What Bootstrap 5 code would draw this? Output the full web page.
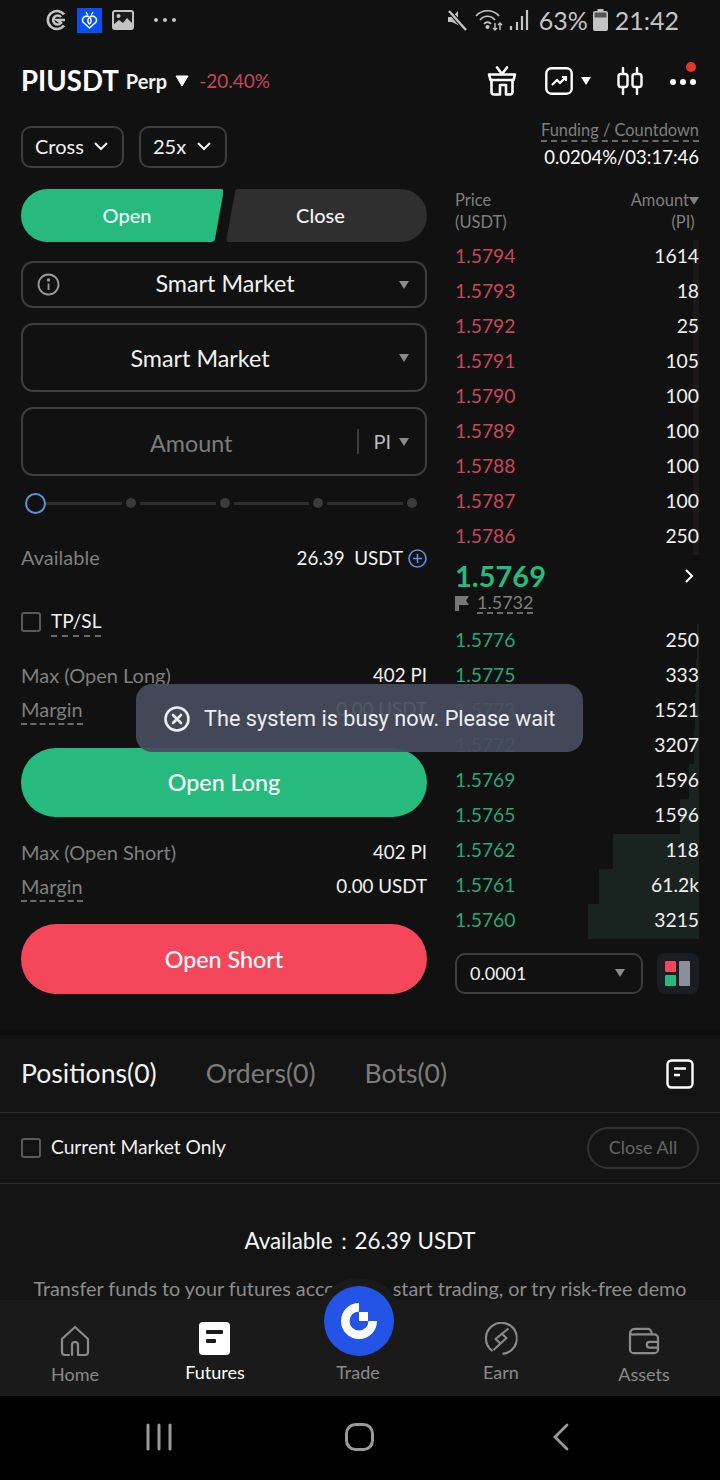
<!DOCTYPE html>
<html lang="en">
<head>
    <meta charset="UTF-8">
    <meta name="viewport" content="width=device-width, initial-scale=1.0">
    <title>PIUSDT Perp</title>
    <link href="https://cdn.jsdelivr.net/npm/bootstrap@5.3.3/dist/css/bootstrap.min.css" rel="stylesheet">
    <style>
        body {
            width: 720px;
            height: 1480px;
            overflow: hidden;
            background: #111;
            color: #f2f2f2;
            font-family: Lato, "Liberation Sans", sans-serif;
            position: relative;
        }
        svg { display: block; }
        .status-bar { height: 42px; padding: 0 41px 2px 46px; color: #c4c4c4; }
        .status-txt { font-size: 25px; line-height: 1; }
        .top-bar { height: 78px; padding: 0 24px 0 21px; }
        .pair-name { font-size: 27.600px; font-weight: 700; color: #fff; }
        .pair-perp { font-size: 20px; font-weight: 700; margin-left: 7px; }
        .pair-pct { font-size: 19px; color: #c7455f; margin-left: 10px; }
        .main-wrap { height: 910px; padding: 0 21px; }
        .left-col { width: 406px; padding-top: 6px; }
        .right-col { width: 244px; margin-left: 28px; }
        .pick-row { gap: 15px; }
        .pick-btn { height: 42px; border: 2px solid #3d3d3d; border-radius: 10px; font-size: 20px; padding: 0 14px 2px 12px; color: #f2f2f2; }
        .seg-row { margin-top: 21px; height: 53px; }
        .seg-open, .seg-close { height: 53px; font-size: 20px; font-weight: 500; padding-bottom: 2px; }
        .seg-open { width: 202px; background: #26ba7e; color: #eafff5; padding-left: 10px; clip-path: path('M26.5 0H200Q203 0 202.500 3L194 50Q193.500 53 190 53H26.500A26.500 26.500 0 0 1 26.500 0Z'); }
        .seg-close { width: 201px; margin-left: 3px; background: #2f2f2f; color: #f2f2f2; padding-right: 12px; clip-path: path('M12 0H174.500A26.500 26.500 0 0 1 174.500 53H3Q0 53 .5 50L9 3Q9.500 0 12 0Z'); }
        .box-field { border: 2px solid #3d3d3d; border-radius: 12px; padding: 0 16px 0 14px; font-size: 23.300px; position: relative; }
        .field-sm { height: 47px; margin-top: 19px; }
        .field-sm .field-label { padding: 0 9px 2px 0; }
        .field-lg { height: 69px; margin-top: 15px; }
        .field-label { flex: 1; text-align: center; }
        .label-market { padding: 2px 36px 0 0; }
        .label-amount { padding: 4px 12px 0 0; color: #7c7c7c; }
        .tri-down { width: 0; height: 0; border-left: 5.5px solid transparent; border-right: 5.5px solid transparent; border-top: 8px solid #8b8b8b; }
        .amt-unit { border-left: 2px solid #3d3d3d; height: 25px; padding-left: 14px; margin-right: 8px; line-height: 25px; font-size: 20px; color: #bcbcbc; }
        .slider-row { height: 20px; margin-top: 17px; padding-left: 4px; padding-right: 10px; }
        .slider-knob { width: 21px; height: 21px; border: 2.5px solid #5d90dd; border-radius: 50%; flex: none; margin-right: -4px; }
        .slider-line { height: 3px; background: #2e2e2e; flex: 1; margin: 0 4px; }
        .slider-dot { width: 10px; height: 10px; background: #3b3b3b; border-radius: 50%; flex: none; }
        .info-row { height: 24px; line-height: 22px; font-size: 20px; align-items: flex-start; }
        .info-val { font-size: 18.800px; }
        .avail-val { height: 24px; }
        .dim-txt { color: #7f7f7f; }
        .dash-txt { border-bottom: 2px dashed #6a6a6a; display: inline-block; padding-bottom: 3px; }
        .check-box { width: 20px; height: 20px; border: 2px solid #5a5a5a; border-radius: 3px; flex: none; }
        .tpsl-txt { font-size: 19px; margin-left: 10px; }
        .trade-btn { height: 69px; width: 100%; border-radius: 35px; border: 0; color: #fff; font-size: 23.300px; font-weight: 500; }
        .book-funding { text-align: right; font-size: 16.400px; margin-top: -2px; }
        .book-funding .dash-txt { line-height: 21px; padding-bottom: 0; }
        .funding-val { font-size: 18.500px; line-height: 22px; margin-top: 3px; color: #fff; }
        .book-head { margin-top: 21px; font-size: 16.500px; line-height: 22px; margin-bottom: 7px; color: #7f7f7f; }
        .book-line { height: 35px; position: relative; font-size: 19.300px; padding-bottom: 2px; }
        .book-line span { position: relative; }
        .depth-bar { position: absolute; right: 0; top: 0; bottom: 0; background: #19231f; }
        .depth-red { background: #1e1a1b; }
        .ask-price { color: #c9465d; }
        .bid-price { color: #2ba678; }
        .last-block { height: 69px; padding-top: 4px; }
        .last-price { font-size: 29px; font-weight: 700; color: #26ba7e; line-height: 34px; }
        .mark-price { font-size: 18px; color: #7f7f7f; line-height: 20px; margin-top: -1px; }
        .mark-price .dash-txt { padding-bottom: 0; }
        .step-row { margin-top: 14px; }
        .step-box { width: 188px; height: 41px; border: 2px solid #3d3d3d; border-radius: 10px; font-size: 18px; padding: 0 16px 0 13px; }
        .layout-box { width: 42px; height: 41px; background: #1a1d22; border-radius: 8px; }
        .lower-wrap { background: #141414; border-top: 5px solid #0e0e0e; height: 270px; overflow: hidden; }
        .tab-row { height: 78px; padding: 0 21px; border-bottom: 1px solid #2b2b2b; font-size: 26.600px; }
        .tab-off { color: #7c7c7c; margin-left: 49px; }
        .filter-row { height: 71px; padding: 0 21px; border-bottom: 1px solid #2b2b2b; font-size: 19.200px; }
        .filter-label { margin-left: 10px; padding-bottom: 2px; }
        .close-all { width: 112px; height: 42px; border: 2px solid #333; border-radius: 21px; color: #666; font-size: 18px; padding: 0 0 2px; }
        .empty-title { margin-top: 41px; font-size: 22.400px; line-height: 32px; color: #f5f5f5; }
        .empty-sub { margin-top: 17px; font-size: 19.800px; line-height: 28px; color: #8c8c8c; white-space: nowrap; }
        .tab-bar { height: 96px; background: #1a1a1a; position: relative; }
        .tab-item { position: absolute; top: 0; bottom: 0; width: 100px; }
        .tab-item svg { position: absolute; top: 25px; left: 50%; transform: translateX(-50%); }
        .tab-item div { position: absolute; left: 0; right: 0; text-align: center; font-size: 18px; color: #8a8a8a; line-height: 22px; top: 61px; }
        .tab-item .tab-low { top: 63px; }
        .tab-item .tab-on { color: #fff; }
        .tab-item .icon-futures { top: 22px; }
        .tab-item .icon-earn { top: 22px; }
        .tab-item .icon-assets { top: 27px; }
        .trade-halo { position: absolute; left: 315px; top: -22px; width: 88px; height: 88px; border-radius: 50%; background: #1a1a1a; }
        .trade-circle { position: absolute; left: 324px; top: -14px; width: 70px; height: 70px; border-radius: 50%; background: #2354e6; }
        .sys-bar { height: 84px; background: #000; }
        .sys-icon { position: absolute; top: 27px; }
        .busy-toast { position: absolute; left: 136px; top: 684px; width: 447px; height: 68px; border-radius: 16px; background: rgba(70, 76, 92, .93); font-family: Roboto, sans-serif; font-size: 21.700px; color: #eceef2; padding: 2px 0 0 28px; gap: 14px; }
        .red-dot { position: absolute; right: 24px; top: 62px; width: 10px; height: 10px; border-radius: 50%; background: #e5352b; }
    </style>
</head>
<body>
    <!-- status bar -->
    <div class="status-bar d-flex align-items-center justify-content-between">
        <div class="d-flex align-items-center">
            <svg width="22" height="22" viewBox="0 0 22 22" fill="none" stroke="#c4c4c4" stroke-width="2.600"><path d="M18 5.500A9 9 0 1 0 18 16.500"/><path d="M15 8A4.500 4.500 0 1 0 15 14L11 11H19"/></svg>
            <svg width="25" height="25" viewBox="0 0 25 25" style="margin-left:9px"><rect width="25" height="25" fill="#0a4ff0"/><path d="M12.500 20L6 14A4 4 0 0 1 12.500 9.500A4 4 0 0 1 19 14Z M12.500 9.500A4 4 0 0 0 12.500 16A4 4 0 0 0 12.500 9.500Z" fill="none" stroke="#fff" stroke-width="1.500"/><path d="M9 4L11 7.500M16 4L14 7.500" fill="none" stroke="#fff" stroke-width="1.300"/></svg>
            <svg width="22" height="20" viewBox="0 0 22 20" style="margin-left:10px"><rect x="1" y="1" width="20" height="18" rx="2" fill="#1c1c1c" stroke="#c4c4c4" stroke-width="2"/><path d="M1 19V15L7 10L11 13L15 8L21 14V19Z" fill="#c4c4c4"/><circle cx="6.500" cy="6" r="2" fill="#c4c4c4"/></svg>
            <svg width="24" height="6" viewBox="0 0 24 6" style="margin-left:19px"><circle cx="3" cy="3" r="2" fill="#c4c4c4"/><circle cx="12" cy="3" r="2" fill="#c4c4c4"/><circle cx="21" cy="3" r="2" fill="#c4c4c4"/></svg>
        </div>
        <div class="d-flex align-items-center">
            <svg width="20" height="22" viewBox="0 0 20 22"><path d="M1 8H5L11 2V16L5 13H1Z" fill="#c4c4c4"/><path d="M2 2L19 21" stroke="#111" stroke-width="4.500"/><path d="M2 2L19 21" stroke="#c4c4c4" stroke-width="2.400"/></svg>
            <svg width="28" height="22" viewBox="0 0 28 22" fill="none" stroke="#c4c4c4" stroke-width="1.700" style="margin-left:8px"><path d="M1 7C7 0 18 0 24 7"/><path d="M5 11C9 6 16 6 20 11"/><path d="M9 15C11 12.500 14 12.500 16 15"/><circle cx="12.500" cy="18" r="1.200" fill="#c4c4c4"/><path d="M20 14V21M18 19L20 21L22 19M25 21V14M23 16L25 14L27 16" stroke-width="1.400"/></svg>
            <svg width="20" height="22" viewBox="0 0 20 22" stroke="#c4c4c4" stroke-width="2.200" style="margin-left:6px"><path d="M2 21V17M8 21V13M13 21V7M18 21V1"/></svg>
            <span class="status-txt" style="margin-left:10px">63%</span>
            <svg width="15" height="22" viewBox="0 0 15 22" style="margin-left:5px"><path d="M4.500 0H10.500V2H13A2 2 0 0 1 15 4V20A2 2 0 0 1 13 22H2A2 2 0 0 1 0 20V4A2 2 0 0 1 2 2H4.500Z" fill="#c4c4c4"/><rect x="1.500" y="3.500" width="12" height="5" fill="#555"/></svg>
            <span class="status-txt" style="margin-left:7px">21:42</span>
        </div>
    </div>

    <!-- pair header -->
    <div class="top-bar d-flex align-items-center justify-content-between">
        <div class="d-flex align-items-center">
            <span class="pair-name">PIUSDT</span>
            <span class="pair-perp">Perp</span>
            <svg width="14" height="12" viewBox="0 0 14 12" class="ms-2"><path d="M1 1H13L7 11Z" fill="#fff" stroke="#fff" stroke-linejoin="round"/></svg>
            <span class="pair-pct">-20.40%</span>
        </div>
        <div class="d-flex align-items-center">
            <svg width="30" height="30" viewBox="0 0 30 30" fill="none" stroke="#fff" stroke-width="2.600" stroke-linejoin="round" stroke-linecap="round"><path d="M2 8.500H28L26.500 14H3.500Z"/><path d="M4.500 14V26A2.500 2.500 0 0 0 7 28.500H13V19H19V28.500H23A2.500 2.500 0 0 0 25.500 26V14"/><path d="M10 1.500L15 8M20 1.500L15 8"/></svg>
            <svg width="28" height="28" viewBox="0 0 28 28" fill="none" stroke="#fff" stroke-width="2.400" style="margin-left:28px"><rect x="1.300" y="1.300" width="25.400" height="25.400" rx="5"/><path d="M7 18L12 13L15 16L21 10M17 10H21V14" stroke-width="2.200"/></svg>
            <svg width="10" height="8" viewBox="0 0 10 8" style="margin-left:8px"><path d="M0 0H10L5 8Z" fill="#fff"/></svg>
            <svg width="26" height="28" viewBox="0 0 26 28" fill="none" stroke="#fff" stroke-width="2.400" stroke-linecap="round" style="margin-left:26px"><path d="M6 1V27M20 1V27"/><rect x="1.500" y="7" width="9" height="13" rx="2.500" fill="#111"/><rect x="15.500" y="7" width="9" height="13" rx="2.500" fill="#111"/></svg>
            <svg width="26" height="6" viewBox="0 0 26 6" style="margin-left:27px;margin-top:2px"><circle cx="3" cy="3" r="3" fill="#fff"/><circle cx="13" cy="3" r="3" fill="#fff"/><circle cx="23" cy="3" r="3" fill="#fff"/></svg>
        </div>
    </div>
    <div class="red-dot"></div>

    <div class="main-wrap d-flex">
        <!-- order form -->
        <div class="left-col">
            <div class="pick-row d-flex">
                <button class="btn pick-btn d-flex align-items-center" style="width:103px">Cross<svg class="ms-auto" width="14" height="9" viewBox="0 0 14 9" fill="none" stroke="#f2f2f2" stroke-width="2"><path d="M1 1L7 7L13 1"/></svg></button>
                <button class="btn pick-btn d-flex align-items-center" style="width:88px">25x<svg class="ms-auto" width="14" height="9" viewBox="0 0 14 9" fill="none" stroke="#f2f2f2" stroke-width="2"><path d="M1 1L7 7L13 1"/></svg></button>
            </div>
            <div class="seg-row d-flex">
                <div class="seg-open d-flex align-items-center justify-content-center">Open</div>
                <div class="seg-close d-flex align-items-center justify-content-center">Close</div>
            </div>
            <div class="box-field field-sm d-flex align-items-center">
                <svg width="23" height="23" viewBox="0 0 23 23" fill="none" stroke="#9a9a9a" stroke-width="1.800"><circle cx="11.500" cy="11.500" r="10"/><path d="M11.500 10.500V17"/><circle cx="11.500" cy="7" r=".8"/></svg>
                <span class="field-label">Smart Market</span>
                <span class="tri-down"></span>
            </div>
            <div class="box-field field-lg d-flex align-items-center">
                <span class="field-label label-market">Smart Market</span>
                <span class="tri-down"></span>
            </div>
            <div class="box-field field-lg d-flex align-items-center">
                <span class="field-label label-amount">Amount</span>
                <span class="amt-unit">PI</span>
                <span class="tri-down"></span>
            </div>
            <div class="slider-row d-flex align-items-center">
                <span class="slider-knob"></span>
                <span class="slider-line"></span><span class="slider-dot"></span>
                <span class="slider-line"></span><span class="slider-dot"></span>
                <span class="slider-line"></span><span class="slider-dot"></span>
                <span class="slider-line"></span><span class="slider-dot"></span>
            </div>
            <div class="info-row d-flex justify-content-between" style="margin-top:33px">
                <span class="dim-txt">Available</span>
                <span class="info-val avail-val d-flex align-items-center">26.39&nbsp;&nbsp;USDT
                    <svg width="19" height="19" viewBox="0 0 19 19" fill="none" stroke="#5d90dd" stroke-width="1.600" style="margin-left:5px"><circle cx="9.500" cy="9.500" r="8.500"/><path d="M9.500 5V14M5 9.500H14"/></svg>
                </span>
            </div>
            <div class="info-row d-flex" style="margin-top:40px">
                <span class="check-box" style="margin-top:2px"></span>
                <span class="dash-txt tpsl-txt">TP/SL</span>
            </div>
            <div class="info-row d-flex justify-content-between" style="margin-top:30px">
                <span class="dim-txt">Max (Open Long)</span><span class="info-val">402 PI</span>
            </div>
            <div class="info-row d-flex justify-content-between" style="margin-top:10px">
                <span class="dim-txt dash-txt">Margin</span><span class="info-val">0.00 USDT</span>
            </div>
            <button class="btn trade-btn d-block" style="margin-top:26px;background:#26ba7e">Open Long</button>
            <div class="info-row d-flex justify-content-between" style="margin-top:24px">
                <span class="dim-txt">Max (Open Short)</span><span class="info-val">402 PI</span>
            </div>
            <div class="info-row d-flex justify-content-between" style="margin-top:10px">
                <span class="dim-txt dash-txt">Margin</span><span class="info-val">0.00 USDT</span>
            </div>
            <button class="btn trade-btn d-block" style="margin-top:25px;background:#f5475c;height:70px">Open Short</button>
        </div>

        <!-- order book -->
        <div class="right-col">
            <div class="book-funding">
                <span class="dim-txt dash-txt">Funding / Countdown</span>
                <div class="funding-val">0.0204%/03:17:46</div>
            </div>
            <div class="book-head d-flex justify-content-between">
                <div>Price<br>(USDT)</div>
                <div class="text-end">Amount<svg class="d-inline" width="10" height="8" viewBox="0 0 10 8"><path d="M0 0H10L5 8Z" fill="#7f7f7f"/></svg><br>(PI)&nbsp;</div>
            </div>
            <div id="asks"></div>
            <div class="last-block d-flex justify-content-between">
                <div>
                    <div class="last-price">1.5769</div>
                    <div class="mark-price d-flex align-items-center">
                        <svg width="14" height="16" viewBox="0 0 14 16" class="me-2"><path d="M0 1H14L11 5.500L14 10H4V16H0Z" fill="#777"/></svg>
                        <span class="dash-txt">1.5732</span>
                    </div>
                </div>
                <svg width="10" height="16" viewBox="0 0 10 16" fill="none" stroke="#fff" stroke-width="2" style="margin:9px 5px 0 0"><path d="M2 2L8 8L2 14"/></svg>
            </div>
            <div id="bids"></div>
            <div class="step-row d-flex justify-content-between">
                <div class="step-box d-flex align-items-center justify-content-between"><span>0.0001</span><span class="tri-down"></span></div>
                <div class="layout-box d-flex align-items-center justify-content-center">
                    <svg width="26" height="25" viewBox="0 0 26 25"><rect width="11" height="11" rx="1" fill="#f5475c"/><rect y="14" width="11" height="11" rx="1" fill="#26ba7e"/><rect x="14" width="11" height="25" rx="1" fill="#8b8f9c"/></svg>
                </div>
            </div>
        </div>
    </div>

    <!-- positions -->
    <div class="lower-wrap">
        <div class="tab-row d-flex align-items-center">
            <span>Positions(0)</span>
            <span class="tab-off">Orders(0)</span>
            <span class="tab-off">Bots(0)</span>
            <svg class="ms-auto" width="28" height="30" viewBox="0 0 28 30" fill="none" stroke="#fff" stroke-width="2.400" style="margin-right:5px"><rect x="1.500" y="1.500" width="25" height="27" rx="4"/><path d="M8 9.500H20M8 16H14"/></svg>
        </div>
        <div class="filter-row d-flex align-items-center">
            <span class="check-box"></span>
            <span class="filter-label">Current Market Only</span>
            <button class="btn close-all ms-auto">Close All</button>
        </div>
        <div class="empty-title text-center">Available：26.39 USDT</div>
        <div class="empty-sub text-center">Transfer funds to your futures account to start trading, or try risk-free demo</div>
    </div>

    <!-- bottom tabs -->
    <div class="tab-bar">
        <div class="trade-halo"></div>
        <div class="trade-circle d-flex align-items-center justify-content-center">
            <svg width="36" height="36" viewBox="0 0 36 36"><path d="M18 0A18 18 0 1 0 36 18H27.500A9.500 9.500 0 1 1 18 8.500Z" fill="#fff"/><rect x="18" y="9" width="9" height="9" fill="#fff"/></svg>
        </div>
        <div class="tab-item" style="left:25px">
            <svg width="32" height="32" viewBox="0 0 32 32" fill="none" stroke="#8a8a8a" stroke-width="2.200" stroke-linecap="round" stroke-linejoin="round"><path d="M13 30V20A3 3 0 0 1 19 20V30H26A3 3 0 0 0 29 27V14L16 2L3 14V27A3 3 0 0 0 6 30H10"/></svg>
            <div class="tab-low">Home</div>
        </div>
        <div class="tab-item" style="left:165px">
            <svg class="icon-futures" width="32" height="33" viewBox="0 0 32 33"><rect width="31" height="33" rx="4" fill="#fff"/><rect x="7" y="8" width="17" height="4" rx="1" fill="#1a1a1a"/><rect x="7" y="17" width="10" height="4" rx="1" fill="#1a1a1a"/></svg>
            <div class="tab-on">Futures</div>
        </div>
        <div class="tab-item" style="left:308px">
            <div>Trade</div>
        </div>
        <div class="tab-item" style="left:451px">
            <svg class="icon-earn" width="33" height="33" viewBox="0 0 33 33" fill="none" stroke="#8a8a8a" stroke-width="2.200" stroke-linejoin="round"><path d="M8 29A15.500 15.500 0 1 1 18 31.800"/><path d="M24 6.500L11 17L16.500 22M9 28L22 16L16.500 11"/></svg>
            <div>Earn</div>
        </div>
        <div class="tab-item" style="left:594px">
            <svg class="icon-assets" width="32" height="28" viewBox="0 0 34 30" fill="none" stroke="#8a8a8a" stroke-width="2.400" stroke-linejoin="round"><path d="M2 7A5 5 0 0 1 7 2H21A4 4 0 0 1 25 6V8H6A4 4 0 0 1 2 7V24A4 4 0 0 0 6 28H28A4 4 0 0 0 32 24V12A4 4 0 0 0 28 8H25M32 16H23A3 3 0 0 0 23 22H32"/></svg>
            <div class="tab-low">Assets</div>
        </div>
    </div>
    <div class="sys-bar position-relative">
        <svg class="sys-icon" style="left:146px" width="26" height="28" viewBox="0 0 26 28" stroke="#9a9a9a" stroke-width="3" stroke-linecap="round"><path d="M2 2V26M13 2V26M24 2V26"/></svg>
        <svg class="sys-icon" style="left:345px" width="29" height="28" viewBox="0 0 29 28" fill="none" stroke="#9a9a9a" stroke-width="3"><rect x="1.500" y="1.500" width="26" height="25" rx="9"/></svg>
        <svg class="sys-icon" style="left:552px" width="18" height="28" viewBox="0 0 18 28" fill="none" stroke="#9a9a9a" stroke-width="2.800" stroke-linecap="round"><path d="M15 2L3 14L15 26"/></svg>
    </div>

    <div class="busy-toast d-flex align-items-center">
        <svg width="26" height="26" viewBox="0 0 26 26" fill="none" stroke="#eceef2" stroke-width="2.600" stroke-linecap="round"><circle cx="13" cy="13" r="11.500"/><path d="M9 9L17 17M17 9L9 17"/></svg>
        <span>The system is busy now. Please wait</span>
    </div>

    <script>
        // order book rows: price, amount, depth bar width in px
        const asks = [
            ['1.5794', '1614', 6], ['1.5793', '18', 6], ['1.5792', '25', 6],
            ['1.5791', '105', 6], ['1.5790', '100', 6], ['1.5789', '100', 6],
            ['1.5788', '100', 6], ['1.5787', '100', 6], ['1.5786', '250', 6]
        ];
        const bids = [
            ['1.5776', '250', 2], ['1.5775', '333', 3], ['1.5773', '1521', 4],
            ['1.5772', '3207', 5], ['1.5769', '1596', 10], ['1.5765', '1596', 19],
            ['1.5762', '118', 86], ['1.5761', '61.2k', 100], ['1.5760', '3215', 111]
        ];
        function fill(id, rows, priceClass, barClass) {
            document.getElementById(id).innerHTML = rows.map(function(r) {
                return '<div class="book-line d-flex justify-content-between align-items-center">' +
                    '<div class="depth-bar ' + barClass + '" style="width:' + r[2] + 'px"></div>' +
                    '<span class="' + priceClass + '">' + r[0] + '</span><span>' + r[1] + '</span></div>';
            }).join('');
        }
        fill('asks', asks, 'ask-price', 'depth-red');
        fill('bids', bids, 'bid-price', '');
    </script>
    <script src="https://cdn.jsdelivr.net/npm/bootstrap@5.3.3/dist/js/bootstrap.bundle.min.js"></script>
</body>
</html>
